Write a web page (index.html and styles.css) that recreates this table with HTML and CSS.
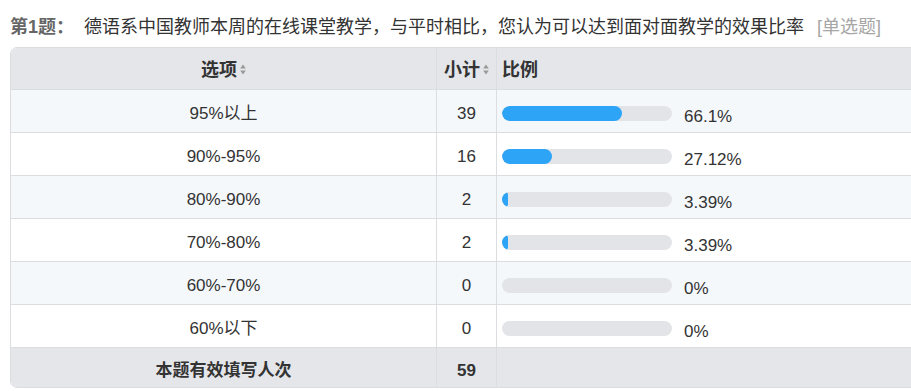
FILE: index.html
```html
<!DOCTYPE html>
<html lang="zh-CN">
<head>
<meta charset="utf-8">
<title>第1题</title>
<link rel="stylesheet" href="styles.css">
</head>
<body>
<div class="page">
  <div class="question">
    <span class="q-no">第1题：</span>
    <span class="q-text">德语系中国教师本周的在线课堂教学，与平时相比，您认为可以达到面对面教学的效果比率</span>
    <span class="q-type">[单选题]</span>
  </div>
  <table class="stats">
    <colgroup>
      <col class="c-opt">
      <col class="c-cnt">
      <col class="c-pct">
    </colgroup>
    <thead>
      <tr>
        <th class="center">选项<svg class="sort" width="6" height="11" viewBox="0 0 6 11"><path d="M3 0.5L5.8 4.5H0.2Z M3 10.5L5.8 6.5H0.2Z" fill="#999999"/></svg></th>
        <th class="center cnt-h">小计<svg class="sort" width="6" height="11" viewBox="0 0 6 11"><path d="M3 0.5L5.8 4.5H0.2Z M3 10.5L5.8 6.5H0.2Z" fill="#999999"/></svg></th>
        <th class="left">比例</th>
      </tr>
    </thead>
    <tbody>
      <tr class="odd">
        <td class="center">95%以上</td>
        <td class="center">39</td>
        <td><div class="ratio"><div class="track"><div class="fill" style="width:120px"></div></div><span class="pct">66.1%</span></div></td>
      </tr>
      <tr>
        <td class="center">90%-95%</td>
        <td class="center">16</td>
        <td><div class="ratio"><div class="track"><div class="fill" style="width:50px"></div></div><span class="pct">27.12%</span></div></td>
      </tr>
      <tr class="odd">
        <td class="center">80%-90%</td>
        <td class="center">2</td>
        <td><div class="ratio"><div class="track"><div class="fill" style="width:6px"></div></div><span class="pct">3.39%</span></div></td>
      </tr>
      <tr>
        <td class="center">70%-80%</td>
        <td class="center">2</td>
        <td><div class="ratio"><div class="track"><div class="fill" style="width:6px"></div></div><span class="pct">3.39%</span></div></td>
      </tr>
      <tr class="odd">
        <td class="center">60%-70%</td>
        <td class="center">0</td>
        <td><div class="ratio"><div class="track"></div><span class="pct">0%</span></div></td>
      </tr>
      <tr>
        <td class="center">60%以下</td>
        <td class="center">0</td>
        <td><div class="ratio"><div class="track"></div><span class="pct">0%</span></div></td>
      </tr>
    </tbody>
    <tfoot>
      <tr>
        <td class="center">本题有效填写人次</td>
        <td class="center">59</td>
        <td></td>
      </tr>
    </tfoot>
  </table>
</div>
</body>
</html>
```
FILE: styles.css
```css
html, body {
  margin: 0;
  padding: 0;
  background: #ffffff;
  overflow: hidden;
}
body {
  font-family: "Liberation Sans", "Noto Sans CJK SC", Arial, sans-serif;
  color: #333333;
}
.page {
  padding: 14px 0 0 10px;
  width: 1100px;
}
.question {
  font-size: 18px;
  line-height: 26px;
  height: 26px;
  white-space: nowrap;
  margin-bottom: 7px;
}
.q-no {
  font-weight: bold;
  color: #666666;
  margin-right: 5px;
}
.q-text {
  color: #333333;
}
.q-type {
  color: #a6a6a6;
  margin-left: 8px;
}
.stats {
  width: 1000px;
  border-collapse: separate;
  border-spacing: 0;
  border: 1px solid #dcdde1;
  border-radius: 7px;
  overflow: hidden;
  font-size: 17px;
  table-layout: fixed;
}
.c-opt { width: 425px; }
.c-cnt { width: 60px; }
.stats th,
.stats td {
  padding: 5px 5px 0;
  line-height: 22px;
  white-space: nowrap;
}
.stats th + th,
.stats td + td {
  border-left: 1px solid #dcdde1;
}
.stats tbody td,
.stats tfoot td {
  border-top: 1px solid #dcdde1;
}
.stats thead th {
  height: 38px;
  padding-top: 3px;
  background: #e4e6ea;
  font-weight: bold;
  font-size: 18px;
  color: #333333;
}
.stats tbody td {
  height: 37px;
}
.stats tbody tr.odd td {
  background: #f5f8fb;
}
.stats tfoot td {
  height: 32px;
  padding-top: 7px;
  background: #e4e6ea;
  font-weight: bold;
  font-size: 17px;
}
.center { text-align: center; }
.left { text-align: left; }
.cnt-h { padding-left: 2px !important; padding-right: 2px !important; }
.sort {
  display: inline-block;
  vertical-align: middle;
  margin-left: 3px;
  margin-top: -3px;
}
.ratio {
  display: flex;
  align-items: center;
}
.track {
  width: 170px;
  height: 15px;
  border-radius: 8px;
  background: #e3e4e7;
  overflow: hidden;
  flex: none;
}
.fill {
  height: 100%;
  background: #2ea4f7;
  border-radius: 8px;
}
.pct {
  margin-left: 12px;
  padding-top: 6px;
  color: #333333;
}
```
